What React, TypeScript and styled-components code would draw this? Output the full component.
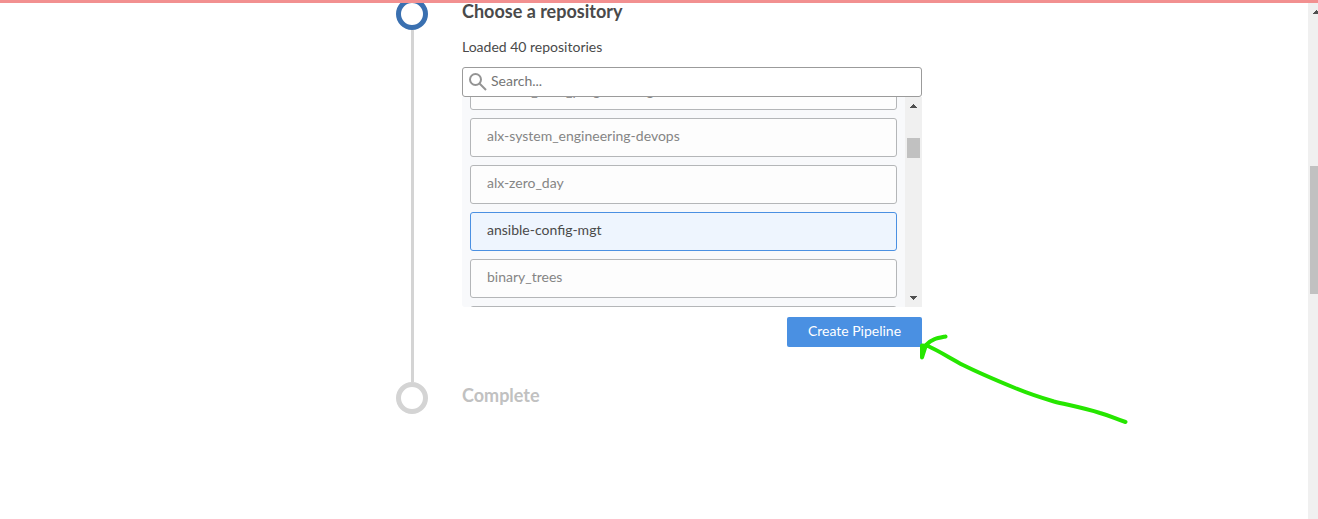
import React from "react";
import styled, { createGlobalStyle } from "styled-components";

const GlobalStyle = createGlobalStyle`
  *, *::before, *::after { box-sizing: border-box; }
  body { margin: 0; background: #fff; overflow: hidden; font-family: Lato, "Open Sans", sans-serif; font-size: 14px; color: #4a4a4a; }
`;

const Page = styled.div`
  position: relative;
  display: flex;
  flex-direction: column;
  width: 1318px;
  height: 519px;
  overflow: hidden;
`;

const ErrorStripe = styled.div`
  flex: none;
  height: 3px;
  background: #f29090;
`;

const Body = styled.div`
  display: flex;
  flex: 1;
  min-height: 0;
  overflow: hidden;
`;

const Steps = styled.main`
  flex: 0 0 1308px;
  padding-left: 396px;
  overflow: hidden;
`;

const Step = styled.section<{ $height: number }>`
  display: flex;
  gap: 34px;
  height: ${(p) => p.$height}px;

  &:first-child { margin-top: -5px; }
`;

const Rail = styled.div`
  display: flex;
  flex-direction: column;
  align-items: center;
  width: 32px;
`;

const Marker = styled.div<{ $active?: boolean }>`
  flex: none;
  width: 32px;
  height: 32px;
  border: 5px solid ${(p) => (p.$active ? "#3a70b0" : "#d4d4d4")};
  border-radius: 50%;
`;

const Line = styled.div`
  flex: 1;
  width: 3px;
  background: #d4d4d4;
`;

const Content = styled.div`
  display: flex;
  flex-direction: column;
  width: 460px;
`;

const Title = styled.h2<{ $muted?: boolean }>`
  margin: 0;
  padding-top: 4px;
  height: 39px;
  font-size: 18px;
  line-height: 18px;
  font-weight: 700;
  color: ${(p) => (p.$muted ? "#c1c1c1" : "#4a4a4a")};
`;

const Status = styled.p`
  margin: 0;
  height: 30px;
  line-height: 20px;
`;

const SearchBox = styled.label`
  display: flex;
  align-items: center;
  gap: 4px;
  height: 30px;
  padding: 0 6px;
  border: 1px solid #9b9b9b;
  border-radius: 3px;
  background: #fff;
`;

const SearchInput = styled.input`
  flex: 1;
  height: 26px;
  padding: 0 0 3px;
  border: 0;
  outline: 0;
  background: transparent;
  font: inherit;

  &::placeholder { color: #757575; opacity: 1; }
`;

const ListFrame = styled.div`
  display: flex;
  height: 210px;
  background: #f8f9fb;
  border-radius: 0 0 0 3px;
`;

const List = styled.div`
  display: flex;
  flex: 1;
  flex-direction: column;
  gap: 8px;
  padding: 0 8px;
  overflow: hidden;

  & > :first-child { margin-top: -26px; line-height: 38px; }
`;

const Repo = styled.div<{ $selected?: boolean }>`
  flex: none;
  height: 39px;
  padding: 0 16px;
  border: 1px solid ${(p) => (p.$selected ? "#4a90e2" : "#b4b6b8")};
  border-radius: 3px;
  background: ${(p) => (p.$selected ? "#eef5fe" : "#fdfdfd")};
  color: ${(p) => (p.$selected ? "#4a4a4a" : "#858585")};
  line-height: 33px;
`;

const Scrollbar = styled.div`
  display: flex;
  flex: none;
  flex-direction: column;
  align-items: center;
  width: 17px;
  background: #f0f0f0;
`;

const ScrollButton = styled.div<{ $size: number }>`
  display: flex;
  flex: none;
  align-items: center;
  justify-content: center;
  width: 17px;
  height: ${(p) => p.$size}px;
`;

const Track = styled.div<{ $offset: number }>`
  flex: 1;
  padding-top: ${(p) => p.$offset}px;
`;

const Thumb = styled.div<{ $length: number }>`
  width: 13px;
  height: ${(p) => p.$length}px;
  background: #c1c1c1;
`;

const CreateButton = styled.button`
  align-self: flex-end;
  width: 135px;
  height: 30px;
  margin-top: 10px;
  padding: 0 0 3px;
  border: 0;
  border-radius: 2px;
  background: #4a90e2;
  color: #fff;
  font: inherit;
`;

const Arrow = styled.svg`
  position: absolute;
  left: 910px;
  top: 325px;
`;

const Caret = ({ down }: { down?: boolean }) => (
  <svg width="9" height="4" viewBox="0 0 9 4" fill="#505050" shapeRendering="crispEdges">
    <path
      d={
        down
          ? "M1 0h7v1H1zM2 1h5v1H2zM3 2h3v1H3zM4 3h1v1H4z"
          : "M4 0h1v1H4zM3 1h3v1H3zM2 2h5v1H2zM1 3h7v1H1z"
      }
    />
  </svg>
);

const SearchIcon = () => (
  <svg width="18" height="18" viewBox="0 0 18 18" fill="none" stroke="#949494" strokeWidth="2">
    <circle cx="6.500" cy="6.500" r="5.500" />
    <path d="M10.500 10.500l6.500 6.500" />
  </svg>
);

const repositories = [
  "alx-low_level_programming",
  "alx-system_engineering-devops",
  "alx-zero_day",
  "ansible-config-mgt",
  "binary_trees",
  "Bit-manipulation",
];

export default function App() {
  return (
    <Page>
      <GlobalStyle />
      <ErrorStripe />
      <Body>
        <Steps>
          <Step $height={384}>
            <Rail>
              <Marker $active />
              <Line />
            </Rail>
            <Content>
              <Title>Choose a repository</Title>
              <Status>Loaded 40 repositories</Status>
              <SearchBox>
                <SearchIcon />
                <SearchInput placeholder="Search..." />
              </SearchBox>
              <ListFrame>
                <List>
                  {repositories.map((name) => (
                    <Repo key={name} $selected={name === "ansible-config-mgt"}>
                      {name}
                    </Repo>
                  ))}
                </List>
                <Scrollbar>
                  <ScrollButton $size={17}>
                    <Caret />
                  </ScrollButton>
                  <Track $offset={24}>
                    <Thumb $length={20} />
                  </Track>
                  <ScrollButton $size={18}>
                    <Caret down />
                  </ScrollButton>
                </Scrollbar>
              </ListFrame>
              <CreateButton>Create Pipeline</CreateButton>
            </Content>
          </Step>
          <Step $height={32}>
            <Rail>
              <Marker />
            </Rail>
            <Content>
              <Title $muted>Complete</Title>
            </Content>
          </Step>
        </Steps>
        <Scrollbar>
          <ScrollButton $size={17}>
            <Caret />
          </ScrollButton>
          <Track $offset={146}>
            <Thumb $length={128} />
          </Track>
        </Scrollbar>
      </Body>
      <Arrow width="230" height="105" viewBox="0 0 230 105" fill="none" stroke="#26e600" strokeWidth="4" strokeLinecap="round" strokeLinejoin="round">
        <path d="M215.500 97C206 94 201 91 190 88C174 83 158 80 144 76.500C132 73 122 70 105 63C88 56 71 49 53 40C40 33 27 25 18 21L12 20.500L12 32.500L16 20C21 14 28 13 35.500 11.500" />
      </Arrow>
    </Page>
  );
}
